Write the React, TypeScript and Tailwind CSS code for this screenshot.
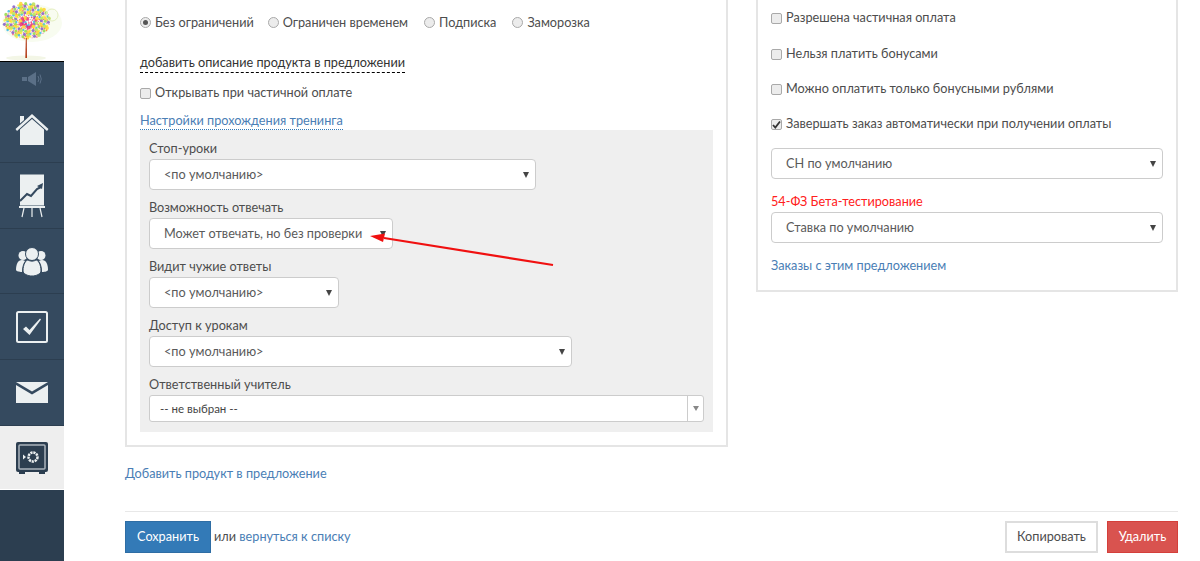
const font = "font-['Lato','Open_Sans',sans-serif]";

// deterministic splatter of dots for the tree crown
const crownColors = ["#f0308a", "#ffd21f", "#8fd63a", "#2db4e8", "#ff7a1a", "#e0218a", "#b6e04a", "#7a4fc0", "#f7ec3c", "#ff4d6a"];
const crownDots = Array.from({ length: 230 }, (_, i) => {
  const a = i * 2.399963;
  const r = Math.sqrt((i + 1) / 230);
  return {
    cx: 27 + Math.cos(a) * r * 23,
    cy: 21 + Math.sin(a) * r * 18,
    r: 0.5 + ((i * 7) % 5) * 0.35,
    fill: r < 0.4 && i % 2 === 0 ? "#e8206f" : crownColors[(i * 3) % crownColors.length],
  };
});

function Logo() {
  return (
    <div className="h-[61px] bg-white">
      <svg width="65" height="61" viewBox="0 0 65 61">
        <ellipse cx="26" cy="58" rx="20" ry="2.500" fill="#f3f6e6" />
        <ellipse cx="32" cy="23" rx="30" ry="19" fill="#f8fcf0" />
        {crownDots.map((d, i) => (
          <circle key={i} cx={d.cx} cy={d.cy} r={d.r} fill={d.fill} opacity="0.8" />
        ))}
        <circle cx="52" cy="15" r="6" fill="none" stroke="#e4efc0" />
        <path d="M25.300 58 L25.800 38 L26.800 38 L27 58 Z" fill="#b5401c" />
      </svg>
    </div>
  );
}

function NavItem({ h, children }: { h: string; children: React.ReactNode }) {
  return <div className={`${h} flex items-center justify-center border-b border-[#2c3e50] bg-[#354a5f]`}>{children}</div>;
}

function HomeIcon() {
  return (
    <svg width="34" height="32" viewBox="0 0 34 32" fill="#ecf0f1">
      <path d="M5 2h4v4l-4 3.500z" />
      <path d="M17 0 33.500 15 32 17 17 3.500 2 17 .5 15z" />
      <path d="M5 15.500 17 5l12 10.500V31H5z" />
    </svg>
  );
}

function ChartIcon() {
  return (
    <svg width="28" height="44" viewBox="0 0 28 44">
      <path d="M2 .5h24v31H2z" fill="#ecf0f1" />
      <path d="M1 32h26v2H1z" fill="#ecf0f1" />
      <path d="M2 27 9 20l4 2 6-7 4-2" fill="none" stroke="#354a5f" strokeWidth="2" />
      <path d="M25 9l-1 6-5-3z" fill="#354a5f" />
      <path d="M6 34 4 43M14 34v9M22 34l2 9" stroke="#ecf0f1" strokeWidth="1.200" />
    </svg>
  );
}

function UsersIcon() {
  return (
    <svg width="34" height="29" viewBox="0 0 34 29" fill="#ecf0f1">
      <circle cx="8" cy="8.500" r="4.500" />
      <circle cx="26" cy="8.500" r="4.500" />
      <path d="M1 23c0-6 2-10 6-10 1 0 2 .5 3 1-2 3-3 6-3 11-3 0-6-1-6-2z" />
      <path d="M33 23c0-6-2-10-6-10-1 0-2 .5-3 1 2 3 3 6 3 11 3 0 6-1 6-2z" />
      <circle cx="17" cy="7" r="6.500" stroke="#354a5f" />
      <path d="M8 24c0-7 3-11 5-11 2 1.500 6 1.500 8 0 2 0 5 4 5 11 0 3-5 5-9 5s-9-2-9-5z" stroke="#354a5f" />
    </svg>
  );
}

function CheckIcon() {
  return (
    <svg width="32" height="32" viewBox="0 0 32 32">
      <rect x="1" y="1" width="30" height="30" rx="1.500" fill="none" stroke="#ecf0f1" strokeWidth="2" />
      <path d="M7 18l3-2.500 3.500 3.500L24 7.500l1 1L13.500 24z" fill="#ecf0f1" />
    </svg>
  );
}

function MailIcon() {
  return (
    <svg width="32" height="21" viewBox="0 0 32 21" fill="#ecf0f1">
      <path d="M0 0h32L16 9.500z" />
      <path d="M0 3l16 9.500L32 3v18H0z" />
    </svg>
  );
}

function SafeIcon() {
  return (
    <svg width="32" height="32" viewBox="0 0 32 32">
      <rect x="0" y="0" width="32" height="30" rx="2" fill="#2c3e50" />
      <path d="M3 30h6v2H3zM23 30h6v2h-6z" fill="#2c3e50" />
      <rect x="3" y="3" width="26" height="24" rx="1" fill="none" stroke="#aab4bc" strokeWidth="1.500" />
      <circle cx="17" cy="15" r="4.500" fill="none" stroke="#ecf0f1" strokeWidth="2.500" strokeDasharray="2.200 0.800" />
      <path d="M7 12.500v5l3-2.500z" fill="#ecf0f1" />
    </svg>
  );
}

function Sidebar() {
  return (
    <div className="w-[64px] shrink-0 h-full flex flex-col bg-[#2c3e50]">
      <Logo />
      <div className="h-[1px] bg-black" />
      <NavItem h="h-[35px]">
        <svg width="20" height="14" viewBox="0 0 20 14" fill="#5b7087">
          <path d="M0 5h5V9H0zM6 5l8-5v14L6 9z" />
          <path d="M16 4q2 3 0 6M18 2.500q2.500 4.500 0 9" fill="none" stroke="#5b7087" />
        </svg>
      </NavItem>
      <NavItem h="h-[66px]"><HomeIcon /></NavItem>
      <NavItem h="h-[66px]"><ChartIcon /></NavItem>
      <NavItem h="h-[65px]"><UsersIcon /></NavItem>
      <NavItem h="h-[66px]"><CheckIcon /></NavItem>
      <NavItem h="h-[66px]"><MailIcon /></NavItem>
      <div className="h-[64px] bg-[#eeeeee] flex items-center justify-center border-b border-white"><SafeIcon /></div>
    </div>
  );
}

function Radio({ label, on, className }: { label: string; on?: boolean; className?: string }) {
  return (
    <span className={`flex items-center ${className ?? ""}`}>
      <span className="w-[11px] h-[11px] rounded-full border border-[#a9a9a9] bg-[#ececec] mr-[4px] flex items-center justify-center">
        {on && <span className="w-[5px] h-[5px] rounded-full bg-[#555]" />}
      </span>
      {label}
    </span>
  );
}

function Check({ label, on, className }: { label: string; on?: boolean; className?: string }) {
  return (
    <label className={`flex items-center ${className ?? ""}`}>
      <span className="w-[11px] h-[11px] rounded-[2px] border border-[#a9a9a9] bg-[#ececec] mr-[4px] flex items-center justify-center">
        {on && (
          <svg width="9" height="9" viewBox="0 0 9 9">
            <path d="M1 5l2.300 2.500L8 1.500" fill="none" stroke="#333" strokeWidth="1.800" />
          </svg>
        )}
      </span>
      {label}
    </label>
  );
}

function Select({ value, className, h = "h-[31px]" }: { value: string; className: string; h?: string }) {
  return (
    <div className={`${className} ${h} rounded-[4px] border border-[#ccc] bg-white flex items-center justify-between pl-[14px] pr-[6px] text-[#5a5a5a]`}>
      <span>{value}</span>
      <span className="w-0 h-0 border-l-[3px] border-r-[3px] border-t-[6px] border-l-transparent border-r-transparent border-t-[#444]" />
    </div>
  );
}

function Field({ label, children }: { label: string; children: React.ReactNode }) {
  return (
    <div className="h-[59px]">
      <div className="h-[20px] leading-[19px]">{label}</div>
      {children}
    </div>
  );
}

function OfferCard() {
  return (
    <div className="w-[603px] h-[447px] border-x-2 border-b-2 border-[#e5e5e5] px-[13px]">
      <div className="flex pt-[7px] h-[32px] items-center box-content">
        <Radio label="Без ограничений" on />
        <Radio label="Ограничен временем" className="ml-[14px]" />
        <Radio label="Подписка" className="ml-[16px]" />
        <Radio label="Заморозка" className="ml-[16px]" />
      </div>
      <div className="mt-[14px] h-[20px] w-fit leading-[19px] text-[#333] border-b border-dashed border-black">добавить описание продукта в предложении</div>
      <Check label="Открывать при частичной оплате" className="mt-[10px] h-[20px]" />
      <a className="block mt-[9px] w-fit h-[18px] leading-[17px] text-[#4a7eb5] border-b border-dotted border-[#337ab7]">Настройки прохождения тренинга</a>
      <div className="h-[302px] bg-[#efefef] px-[9px] pt-[9px]">
        <Field label="Стоп-уроки"><Select value="<по умолчанию>" className="w-[387px]" /></Field>
        <Field label="Возможность отвечать"><Select value="Может отвечать, но без проверки" className="w-[244px]" /></Field>
        <Field label="Видит чужие ответы"><Select value="<по умолчанию>" className="w-[190px]" /></Field>
        <Field label="Доступ к урокам"><Select value="<по умолчанию>" className="w-[423px]" /></Field>
        <div className="h-[20px] leading-[19px]">Ответственный учитель</div>
        <div className="w-[555px] h-[27px] rounded-[3px] border border-[#ccc] bg-white flex items-center text-[11.5px] text-[#444]">
          <span className="flex-1 pl-[10px]">-- не выбран --</span>
          <span className="w-[16px] h-full border-l border-[#ccc] flex items-center justify-center">
            <span className="w-0 h-0 border-l-[3px] border-r-[3px] border-t-[5px] border-l-transparent border-r-transparent border-t-[#888]" />
          </span>
        </div>
      </div>
    </div>
  );
}

function PaymentCard() {
  return (
    <div className="w-[422px] h-[292px] ml-[28px] border-x-2 border-b-2 border-[#e5e5e5] px-[13px]">
      <Check label="Разрешена частичная оплата" className="mt-[8px] h-[20px]" />
      <Check label="Нельзя платить бонусами" className="mt-[16px] h-[20px]" />
      <Check label="Можно оплатить только бонусными рублями" className="mt-[15px] h-[20px]" />
      <Check label="Завершать заказ автоматически при получении оплаты" on className="mt-[15px] h-[20px]" />
      <Select value="СН по умолчанию" className="mt-[14px] w-[392px]" />
      <div className="mt-[13px] h-[18px] leading-[18px] text-[#ff2020]">54-ФЗ Бета-тестирование</div>
      <Select value="Ставка по умолчанию" className="mt-[2px] w-[392px]" />
      <a className="block mt-[13px] leading-[18px] text-[#4a7eb5]">Заказы с этим предложением</a>
    </div>
  );
}

export default function App() {
  return (
    <div className={`${font} relative flex h-[561px] w-[1200px] overflow-hidden bg-white text-[12.7px] text-[#4d4d4d]`}>
      <Sidebar />
      <div className="ml-[61px] w-[1053px]">
        <div className="flex items-start">
          <OfferCard />
          <PaymentCard />
        </div>
        <a className="block mt-[16px] h-[20px] leading-[20px] text-[#4a7eb5]">Добавить продукт в предложение</a>
        <div className="mt-[28px] border-t border-[#e8e8e8] pt-[9px] flex items-center">
          <button className="w-[86px] h-[32px] bg-[#337ab7] border border-[#2e6da4] text-white">Сохранить</button>
          <span className="ml-[3px]">или <a className="text-[#4a7eb5]">вернуться к списку</a></span>
          <button className="ml-auto w-[93px] h-[32px] bg-white border-2 border-[#ddd] text-[#4d4d4d]">Копировать</button>
          <button className="ml-[9px] w-[71px] h-[32px] bg-[#d9534f] border border-[#d43f3a] text-white">Удалить</button>
        </div>
      </div>
      {/* red annotation arrow drawn over the form */}
      <svg className="absolute left-[360px] top-[225px]" width="200" height="50" viewBox="0 0 200 50">
        <path d="M193 40 L24 13" stroke="#f01010" strokeWidth="2.200" />
        <path d="M10 11 L25 8.500 L23 17 Z" fill="#f01010" />
      </svg>
    </div>
  );
}
